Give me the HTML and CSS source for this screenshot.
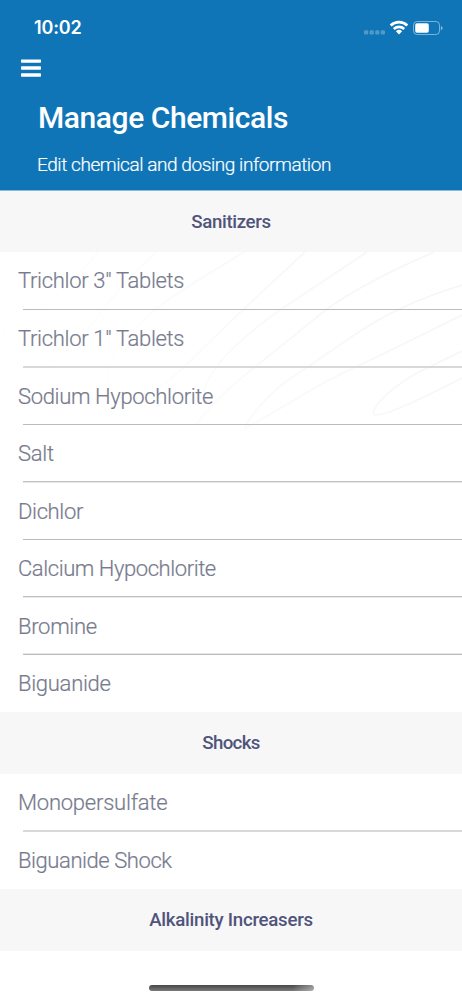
FILE: index.html
```html
<!DOCTYPE html>
<html lang="en">
<head>
<meta charset="utf-8">
<meta name="viewport" content="width=device-width, initial-scale=1">
<title>Manage Chemicals</title>
<link rel="stylesheet" href="styles.css">
</head>
<body>
<div class="screen">
  <header class="header">
    <div class="status">
      <span class="time">10:02</span>
      <svg class="indicators" width="80" height="18" viewBox="0 0 80 18">
        <g fill="#fff" fill-opacity=".27"><rect x="1" y="10.3" width="4.2" height="4.2" rx="1.2"/><rect x="6.6" y="10.3" width="4.2" height="4.2" rx="1.2"/><rect x="12.2" y="10.3" width="4.2" height="4.2" rx="1.2"/><rect x="17.8" y="10.3" width="4.2" height="4.2" rx="1.2"/></g>
        <g fill="none" stroke="#fff" stroke-width="2.7"><path d="M27.7 5.4a12.2 12.2 0 0 1 16.6 0"/><path d="M30.8 9a7.6 7.6 0 0 1 10.4 0"/></g>
        <path d="M32.9 11.3a4.5 4.5 0 0 1 6.2 0L36 14.5z" fill="#fff"/>
        <rect x="50.5" y="1.5" width="26" height="13" rx="3.6" fill="none" stroke="#fff" stroke-opacity=".45"/>
        <rect x="52.2" y="3.2" width="13.6" height="9.6" rx="1.8" fill="#fff"/>
        <path d="M77.9 5.9q1.8.7 1.8 2.2t-1.8 2.2z" fill="#fff" fill-opacity=".5"/>
      </svg>
    </div>
    <svg class="menu" width="20" height="18" viewBox="0 0 20 18"><g fill="#fff"><rect y=".4" width="20" height="3.4" rx=".7"/><rect y="7.3" width="20" height="3.4" rx=".7"/><rect y="14.3" width="20" height="3.4" rx=".7"/></g></svg>
    <h1 class="title">Manage Chemicals</h1>
    <p class="subtitle">Edit chemical and dosing information</p>
  </header>
  <main class="content">
    <h2 class="section"><span class="sanitizers">Sanitizers</span></h2>
    <div class="list sanitizer-list">
      <svg class="waves" width="462" height="178" viewBox="0 252 462 178" fill="none" stroke="url(#fade)" stroke-width="1.8">
        <defs><linearGradient id="fade" gradientUnits="userSpaceOnUse" x1="440" y1="260" x2="130" y2="430"><stop stop-color="#f5f7f7"/><stop offset=".55" stop-color="#f8f9f9"/><stop offset="1" stop-color="#fefefe"/></linearGradient></defs>
        <path d="M98 252C65 290 50 304 22 313Q1 322 1 350"/>
        <path d="M156 252Q124 281 100 314T40 367"/>
        <path d="M244 252L184 289Q148 312 124 340T109 387"/>
        <path d="M305 252L245 308Q215 336 184 367T112 410"/>
        <path d="M367 252L280 310C242 337 209 366 204 392"/>
        <path d="M434 252Q365 282 327 309L255 367Q214 399 196 425"/>
        <path d="M462 285Q396 305 350 338L284 383Q258 404 245 427"/>
        <path d="M462 315L373 359Q336 375 306 393T244 429"/>
        <path d="M462 351L415 374Q382 394 374 410Q370 418 386 413Q401 409 462 378"/>
      </svg>
      <div class="row"><span class="tri">Trichlor 3" Tablets</span></div>
      <div class="row soft"><span class="tri">Trichlor 1" Tablets</span></div>
      <div class="row"><span class="sodium">Sodium Hypochlorite</span></div>
      <div class="row trail"><span class="salt">Salt</span></div>
      <div class="row"><span class="dichlor">Dichlor</span></div>
      <div class="row trail"><span class="calcium">Calcium Hypochlorite</span></div>
      <div class="row lead"><span class="bromine">Bromine</span></div>
      <div class="row last"><span class="biguanide">Biguanide</span></div>
    </div>
    <h2 class="section"><span class="shocks">Shocks</span></h2>
    <div class="list shock-list">
      <div class="row soft"><span class="mono">Monopersulfate</span></div>
      <div class="row last"><span class="bigshock">Biguanide Shock</span></div>
    </div>
    <h2 class="section"><span class="alkalinity">Alkalinity Increasers</span></h2>
  </main>
  <footer class="footer"><div class="home"></div></footer>
</div>
</body>
</html>
```
FILE: styles.css
```css
* { box-sizing: border-box; }
body { margin: 0; background: #fff; font-family: Roboto, sans-serif; }
.screen { width: 462px; height: 1000px; overflow: hidden; display: flex; flex-direction: column; }
.header { height: 190.5px; flex: none; background: linear-gradient(#1075b7 190px, #8bb9d8 190px); color: #fff; display: flex; flex-direction: column; }
.status { height: 59px; flex: none; display: flex; justify-content: space-between; padding: 17px 19px 0 34px; }
.time { font: 600 18px/22px Inter, sans-serif; letter-spacing: -.15px; }
.indicators { margin-top: 3px; }
.menu { margin-left: 21px; flex: none; }
.title { margin: 20px 0 0 38px; font-size: 30px; line-height: 42px; font-weight: 500; white-space: nowrap; letter-spacing: -.43px; }
.subtitle { margin: 11px 0 0 37px; font-size: 19px; line-height: 30px; font-weight: 300; white-space: nowrap; letter-spacing: -.43px; -webkit-text-stroke: .2px; }
.section { margin: 0; height: 61.5px; padding-top: 1px; background: #f7f7f7; color: #50547b; font-size: 18.7px; font-weight: 500; display: flex; align-items: center; justify-content: center; white-space: nowrap; }
.sanitizers { letter-spacing: -.35px; }
.shocks { letter-spacing: -.65px; }
.alkalinity { letter-spacing: -.28px; }
.list { display: grid; position: relative; }
.sanitizer-list { grid-template-rows: 58px 58px 57px 58px 57px 58px 57px 57px; }
.shock-list { grid-template-rows: 58px 57.5px; }
.waves { position: absolute; top: 0; left: 0; }
.row { position: relative; margin-left: 22.5px; border-bottom: 1px solid #bbb; color: #777b8d; font-size: 22px; line-height: 57px; font-weight: 300; white-space: nowrap; -webkit-text-stroke: .2px; }
.row span { display: block; margin-left: -4.5px; height: 55px; }
.tri { letter-spacing: -.31px; }
.sodium { letter-spacing: -.34px; }
.salt { letter-spacing: -.25px; }
.dichlor { letter-spacing: -.36px; }
.calcium { letter-spacing: -.43px; }
.bromine { letter-spacing: -.29px; }
.biguanide { letter-spacing: -.28px; }
.mono { letter-spacing: -.23px; }
.bigshock { letter-spacing: -.43px; }
.row.soft { border-bottom: 2px solid #d8d8d8; }
.row.trail { border-bottom: 1px solid #e8e8e8; box-shadow: inset 0 -1px #c0c0c0; }
.row.lead { box-shadow: inset 0 -1px #e8e8e8; }
.row.last { border-bottom: 0; }
.footer { flex: 1; background: #fff; padding: 34.5px 0 0 148.5px; }
.home { width: 165px; height: 5.5px; border-radius: 3px; background: linear-gradient(90deg, #0000 87%, #fff6), linear-gradient(#474747, #7a7a7a); }
```
